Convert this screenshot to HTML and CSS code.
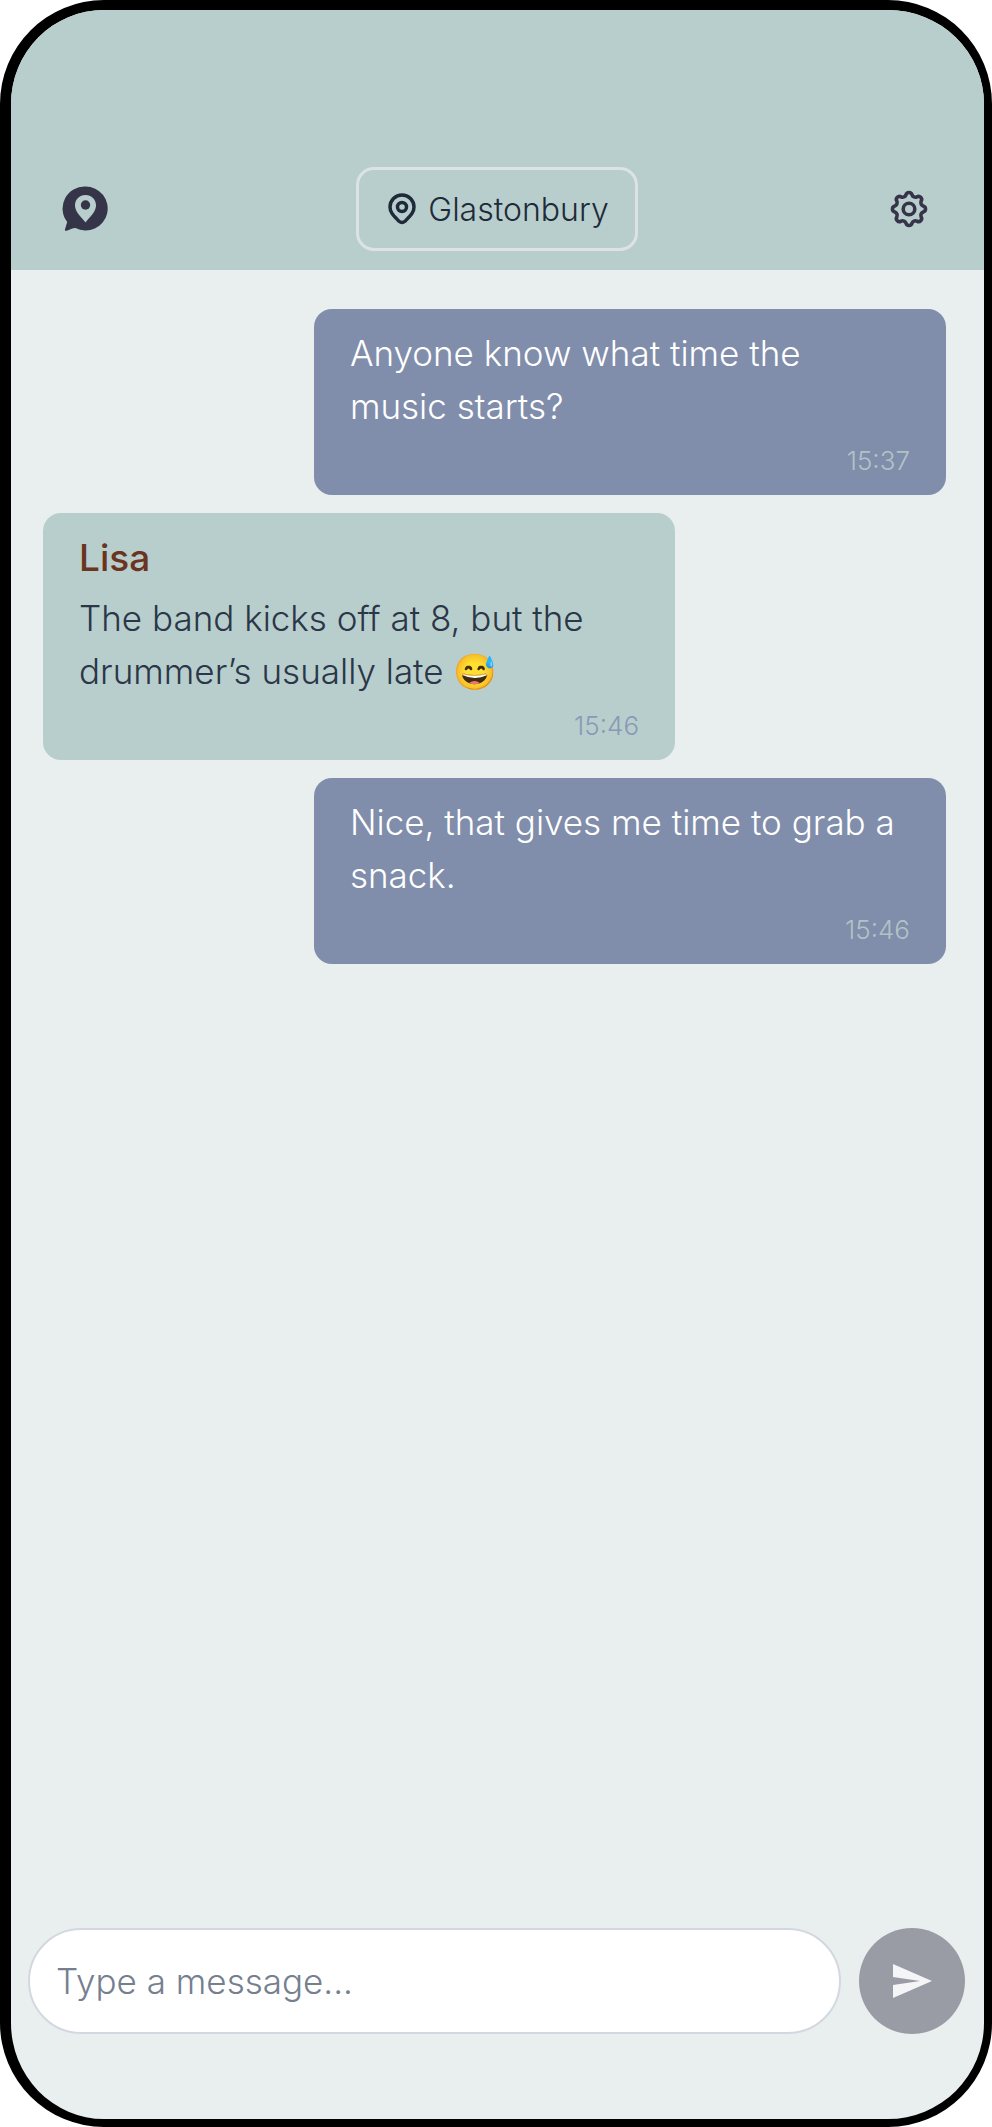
FILE: index.html
```
<!DOCTYPE html>
<html lang="en">
<head>
    <meta charset="utf-8">
    <title>Glastonbury Chat</title>
    <meta name="viewport" content="width=device-width, initial-scale=1">
    <link rel="stylesheet" href="styles.css">
</head>
<body>
    <div class="phone">
        <header class="topbar">
            <button type="button" class="icon-btn" aria-label="Home">
                <svg width="46" height="46" viewBox="0 0 46 46">
                    <path fill="#363449" fill-rule="evenodd" d="M23.500 0.500a22 22 0 1 1-10 41.500c-3 0-6 2-9 2.800q-2 .3-1.500-1.500l2.200-7.300a22 22 0 0 1 18.300-35.500zM23.500 9c-6 0-10.500 4.500-10.500 10.500 0 6.500 6 11 10.500 17 4.500-6 10.500-10.500 10.500-17 0-6-4.500-10.500-10.500-10.500z"/>
                    <circle cx="23.500" cy="19" r="4.700" fill="#363449"/>
                </svg>
            </button>
            <button type="button" class="place">
                <svg width="28" height="32" viewBox="0 0 28 32" fill="none" stroke="#1f2a3a" stroke-width="3.500">
                    <path d="M14 2a12 12 0 0 0-12 12c0 5.500 3.500 8.500 9 14.200q3 2.600 6 0c5.500-5.700 9-8.700 9-14.200a12 12 0 0 0-12-12z"/>
                    <circle cx="14" cy="14" r="4.500"/>
                </svg>
                <span>Glastonbury</span>
            </button>
            <button type="button" class="icon-btn" aria-label="Settings">
                <svg width="40" height="40" viewBox="-20 -20 40 40" fill="none" stroke="#363449" stroke-width="3.600" stroke-linejoin="round">
                    <path d="M14.180-3.010A3.100 3.100 0 0 1 14.180 3.010A3.600 3.600 0 0 0 12.160 7.900A3.100 3.100 0 0 1 7.900 12.160A3.600 3.600 0 0 0 3.010 14.180A3.100 3.100 0 0 1-3.010 14.180A3.600 3.600 0 0 0-7.900 12.160A3.100 3.100 0 0 1-12.160 7.900A3.600 3.600 0 0 0-14.180 3.010A3.100 3.100 0 0 1-14.180-3.010A3.600 3.600 0 0 0-12.160-7.900A3.100 3.100 0 0 1-7.900-12.160A3.600 3.600 0 0 0-3.010-14.180A3.100 3.100 0 0 1 3.010-14.180A3.600 3.600 0 0 0 7.900-12.160A3.100 3.100 0 0 1 12.160-7.900A3.600 3.600 0 0 0 14.180-3.010z"/>
                    <circle r="5.800"/>
                </svg>
            </button>
        </header>

        <main class="messages">
            <div class="msg sent">
                <p>Anyone know what time the<br>music starts?</p>
                <time>15:37</time>
            </div>
            <div class="msg received">
                <h2>Lisa</h2>
                <p>The band kicks off at 8, but the drummer’s usually late 😅</p>
                <time>15:46</time>
            </div>
            <div class="msg sent">
                <p>Nice, that gives me time to grab a snack.</p>
                <time>15:46</time>
            </div>
        </main>

        <form class="composer">
            <input type="text" placeholder="Type a message..." aria-label="Type a message">
            <button type="submit" class="send" aria-label="Send" disabled>
                <svg width="39" height="34" viewBox="0 0 39 34">
                    <path fill="#f3f5f6" d="M0 0l39 17-39 17V21l27-4-27-4z"/>
                </svg>
            </button>
        </form>
    </div>
</body>
</html>
```

FILE: styles.css
```
* { box-sizing: border-box; }
body { margin: 0; background: #fff; font-family: Inter, "Noto Sans", sans-serif; font-weight: 350; }
button { font: inherit; padding: 0; border: 0; background: none; }
svg { display: block; flex: none; }

.phone {
    display: flex;
    flex-direction: column;
    min-height: 100vh;
    border: 8px solid #000;
    border-top-width: 10px;
    border-left-width: 11px;
    border-radius: 104px;
    background: #e8efee;
    overflow: hidden;
}

.topbar {
    display: flex;
    align-items: center;
    justify-content: space-between;
    padding: 157px 45px 19px 44px;
    background: #b8cecc;
}
.icon-btn { display: flex; align-items: center; justify-content: center; width: 60px; height: 60px; }
.place {
    display: flex;
    align-items: center;
    gap: 12px;
    height: 84px;
    padding: 0 26px 0 29px;
    border: 3px solid #dde2e6;
    border-radius: 18px;
    color: #1f2a3a;
    font-size: 32px;
}

.messages {
    flex: 1;
    display: flex;
    flex-direction: column;
    gap: 18px;
    padding: 39px 38px 39px 32px;
}
.msg {
    width: 70%;
    padding: 18px 36px 16px;
    border-radius: 18px;
    font-size: 35px;
    line-height: 53px;
}
.msg p { margin: 0; }
.msg h2 { margin: 0 0 8px; color: #6b3420; font-size: 37px; font-weight: 500; }
.msg time { display: block; margin-top: 10px; font-size: 26px; line-height: 36px; text-align: right; }
.sent { align-self: flex-end; background: #808dab; color: #fff; }
.sent time { color: #b0c4c6; }
.received { background: #b8cecc; color: #2b3648; }
.received time { color: #8b98b5; }

.composer { display: flex; gap: 18px; padding: 0 19px 85px 17px; }
.composer input {
    flex: 1;
    min-width: 0;
    height: 106px;
    padding: 0 26px;
    border: 2px solid #d3d8e0;
    border-radius: 53px;
    background: #fff;
    font: inherit;
    font-size: 35px;
}
.composer input::placeholder { color: #757f90; opacity: 1; }
.send {
    display: flex;
    align-items: center;
    justify-content: center;
    width: 106px;
    height: 106px;
    border-radius: 50%;
    background: #9a9ca5;
}
```
